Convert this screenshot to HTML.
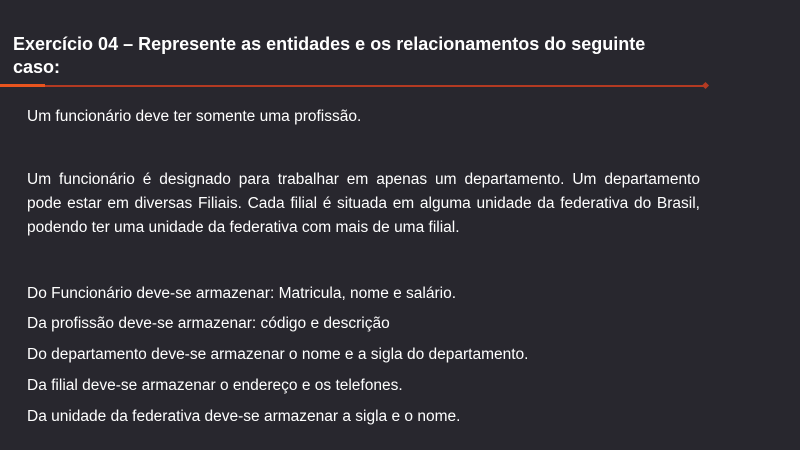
<!DOCTYPE html>
<html><head><meta charset="utf-8"><style>
html,body{margin:0;padding:0}
body{width:800px;height:450px;background:#28272e;position:relative;overflow:hidden;font-family:"Liberation Sans",Arial,sans-serif;color:#fff}
.t{position:absolute;left:13px;top:33px;font-weight:bold;font-size:18px;line-height:23px;letter-spacing:0px;width:720px}
.l{position:absolute;white-space:nowrap;font-size:15.5px;left:27px}
.j{position:absolute;left:27px;width:673px;font-size:15.5px;white-space:nowrap;text-align:justify;text-align-last:justify}
</style></head><body>
<div class="t">Exercício 04 – Represente as entidades e os relacionamentos do seguinte<br>caso:</div>
<div style="position:absolute;left:0;top:85px;width:705px;height:2px;background:#b33a22"></div>
<div style="position:absolute;left:0;top:84px;width:45px;height:3px;background:#e8541e"></div>
<div style="position:absolute;left:703px;top:83px;width:5px;height:5px;background:#b33a22;transform:rotate(45deg)"></div>
<div class="l" style="top:108px">Um funcionário deve ter somente uma profissão.</div>
<div class="j" style="top:171px">Um funcionário é designado para trabalhar em apenas um departamento. Um departamento</div>
<div class="j" style="top:195px">pode estar em diversas Filiais. Cada filial é situada em alguma unidade da federativa do Brasil,</div>
<div class="l" style="top:219px">podendo ter uma unidade da federativa com mais de uma filial.</div>
<div class="l" style="top:285px">Do Funcionário deve-se armazenar: Matricula, nome e salário.</div>
<div class="l" style="top:315px">Da profissão deve-se armazenar: código e descrição</div>
<div class="l" style="top:346px">Do departamento deve-se armazenar o nome e a sigla do departamento.</div>
<div class="l" style="top:377px">Da filial deve-se armazenar o endereço e os telefones.</div>
<div class="l" style="top:408px">Da unidade da federativa deve-se armazenar a sigla e o nome.</div>
</body></html>
